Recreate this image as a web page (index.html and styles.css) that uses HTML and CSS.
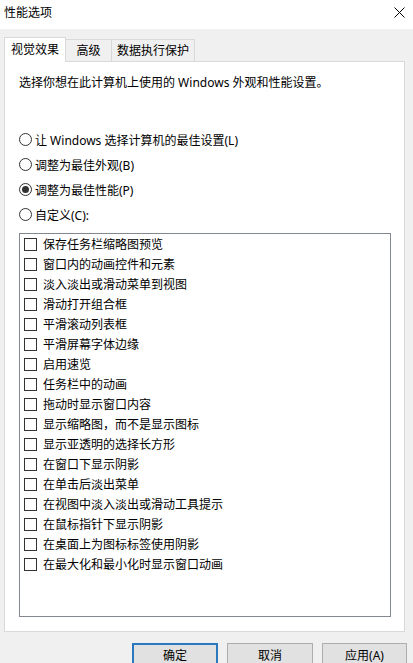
FILE: index.html
```html
<!DOCTYPE html>
<html lang="zh-CN">
<head>
<meta charset="utf-8">
<title>性能选项</title>
<link rel="stylesheet" href="styles.css">
</head>
<body>
<div class="window">
  <div class="titlebar">
    <span class="title">性能选项</span>
    <svg class="close" width="11" height="11" viewBox="0 0 11 11"><path d="M0.5 0.5 L10.5 10.5 M10.5 0.5 L0.5 10.5" stroke="#000" stroke-width="1" fill="none"/></svg>
  </div>
  <div class="tabs">
    <div class="tab active">视觉效果</div>
    <div class="tab t2">高级</div>
    <div class="tab t3">数据执行保护</div>
  </div>
  <div class="panel">
    <p class="desc">选择你想在此计算机上使用的 Windows 外观和性能设置。</p>
    <div class="radios">
      <div class="radio-row"><span class="radio"></span><span>让 Windows 选择计算机的最佳设置(L)</span></div>
      <div class="radio-row"><span class="radio"></span><span>调整为最佳外观(B)</span></div>
      <div class="radio-row"><span class="radio checked"></span><span>调整为最佳性能(P)</span></div>
      <div class="radio-row"><span class="radio"></span><span>自定义(C):</span></div>
    </div>
    <div class="list">
      <div class="item"><span class="box"></span>保存任务栏缩略图预览</div>
      <div class="item"><span class="box"></span>窗口内的动画控件和元素</div>
      <div class="item"><span class="box"></span>淡入淡出或滑动菜单到视图</div>
      <div class="item"><span class="box"></span>滑动打开组合框</div>
      <div class="item"><span class="box"></span>平滑滚动列表框</div>
      <div class="item"><span class="box"></span>平滑屏幕字体边缘</div>
      <div class="item"><span class="box"></span>启用速览</div>
      <div class="item"><span class="box"></span>任务栏中的动画</div>
      <div class="item"><span class="box"></span>拖动时显示窗口内容</div>
      <div class="item"><span class="box"></span>显示缩略图，而不是显示图标</div>
      <div class="item"><span class="box"></span>显示亚透明的选择长方形</div>
      <div class="item"><span class="box"></span>在窗口下显示阴影</div>
      <div class="item"><span class="box"></span>在单击后淡出菜单</div>
      <div class="item"><span class="box"></span>在视图中淡入淡出或滑动工具提示</div>
      <div class="item"><span class="box"></span>在鼠标指针下显示阴影</div>
      <div class="item"><span class="box"></span>在桌面上为图标标签使用阴影</div>
      <div class="item"><span class="box"></span>在最大化和最小化时显示窗口动画</div>
    </div>
  </div>
  <div class="buttons">
    <button class="btn default">确定</button>
    <button class="btn cancel">取消</button>
    <button class="btn apply">应用(A)</button>
  </div>
</div>
</body>
</html>
```

FILE: styles.css
```css
html, body {
  margin: 0;
  padding: 0;
}
body {
  background: #f0f0f0;
  font-family: "Noto Sans", "Noto Sans CJK SC", sans-serif;
  font-size: 12px;
  color: #000;
  overflow: hidden;
}
.window {
  width: 413px;
  height: 663px;
}
.titlebar {
  height: 29px;
  background: #fff;
  display: flex;
  align-items: flex-start;
  justify-content: space-between;
  padding: 0 8px 0 4px;
  box-sizing: border-box;
}
.title {
  line-height: 25px;
}
.close {
  margin-top: 7px;
}
.tabs {
  display: flex;
  align-items: flex-end;
  margin: 8px 0 0 4px;
  height: 24px;
  position: relative;
  z-index: 1;
}
.tab {
  box-sizing: border-box;
  border: 1px solid #d9d9d9;
  border-bottom: none;
  background: #f0f0f0;
  height: 22px;
  line-height: 21px;
  text-align: center;
}
.tab.active {
  background: #fff;
  height: 25px;
  margin-bottom: -1px;
  width: 62px;
  line-height: 24px;
}
.tab.t2 {
  width: 46px;
  border-left: none;
}
.tab.t3 {
  width: 84px;
  border-left: 1px solid #d9d9d9;
  margin-left: -1px;
}
.panel {
  box-sizing: border-box;
  margin: 0 8px 0 4px;
  height: 571px;
  background: #fff;
  border: 1px solid #d9d9d9;
  padding: 12px 13px 0 14px;
}
.desc {
  margin: 0;
  line-height: 18px;
}
.radios {
  margin-top: 35px;
}
.radio-row {
  display: flex;
  align-items: center;
  height: 25px;
}
.radio {
  box-sizing: border-box;
  width: 13px;
  height: 13px;
  border: 1px solid #333;
  border-radius: 50%;
  margin-right: 3px;
  display: flex;
  align-items: center;
  justify-content: center;
  background: #fff;
}
.radio.checked::after {
  content: "";
  width: 7px;
  height: 7px;
  border-radius: 50%;
  background: #333;
}
.list {
  box-sizing: border-box;
  margin-top: 6px;
  height: 384px;
  border: 1px solid #828790;
  padding: 0 0 0 4px;
}
.item {
  display: flex;
  align-items: center;
  height: 20px;
}
.box {
  box-sizing: border-box;
  width: 13px;
  height: 13px;
  border: 1px solid #333;
  background: #fff;
  margin-right: 6px;
}
.buttons {
  display: flex;
  justify-content: flex-end;
  gap: 9px;
  margin: 11px 6px 0 0;
}
.btn {
  box-sizing: border-box;
  height: 26px;
  font: inherit;
  color: #000;
  background: #e1e1e1;
  border: 1px solid #adadad;
  padding: 0;
  line-height: 22px;
}
.btn.default {
  width: 86px;
  border: 2px solid #2b79bd;
}
.btn.cancel {
  width: 86px;
}
.btn.apply {
  width: 85px;
}
```
